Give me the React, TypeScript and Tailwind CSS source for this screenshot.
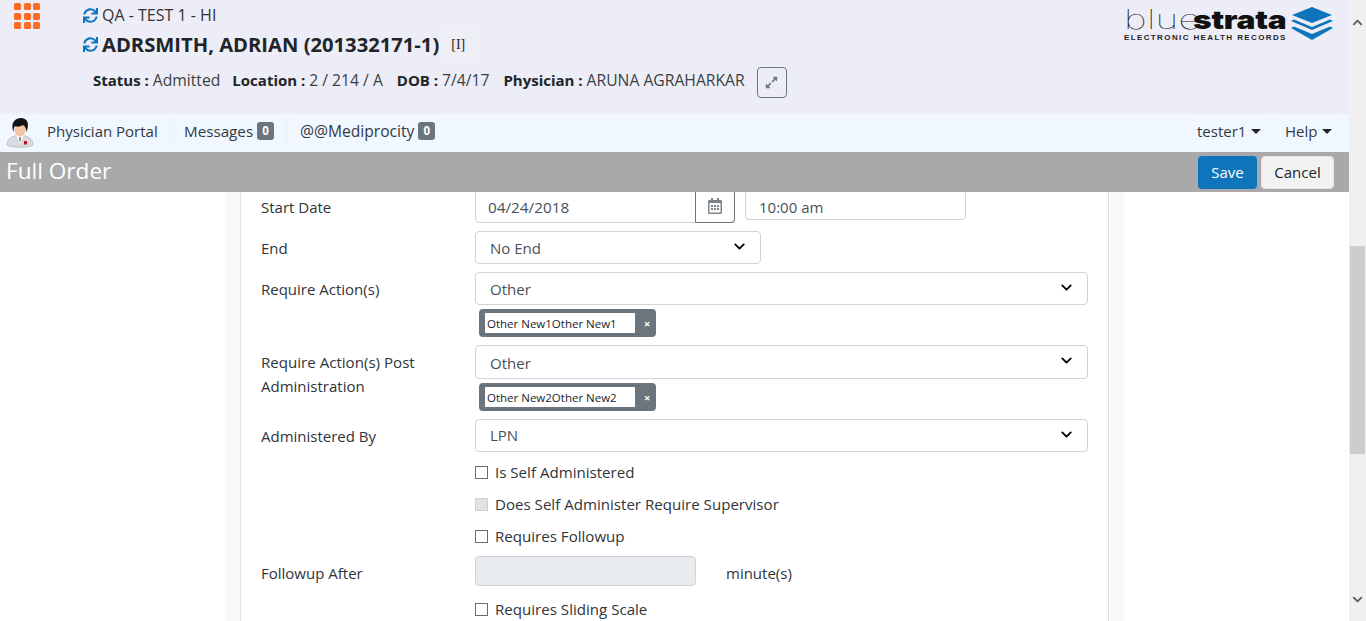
import { FaSync, FaExpandAlt, FaRegCalendarAlt } from "react-icons/fa";
import { ChevronDown, ChevronUp } from "lucide-react";

function Tile() {
  return <span className="size-[7px] rounded-[1.5px] bg-[#ff6a23]" />;
}

function AppGrid() {
  return (
    <div className="grid w-[26px] grid-cols-3 gap-[2.5px]">
      {[0, 1, 2, 3, 4, 5, 6, 7, 8].map((n) => (
        <Tile key={n} />
      ))}
    </div>
  );
}

function DoctorAvatar() {
  return (
    <svg width="28" height="30" viewBox="0 0 28 30" className="shrink-0">
      <path d="M1 27c0-6 4-9 13-10 9 1 13 4 13 10-3 3-23 3-26 0z" fill="#d9dcdf" stroke="#aeb2b6" strokeWidth="0.7" />
      <path d="M10 17l4 8 4-8-4-1z" fill="#fff" />
      <ellipse cx="14" cy="11.5" rx="5.6" ry="7" fill="#f4c5a5" />
      <path d="M7.5 14C4 5 9 0 15 0c6 0 9 5 5.5 14-.5-4-1.500-6-3.500-7-3 2-7 2-8 1-1 1-1.500 3-1.500 6z" fill="#141414" />
      <rect x="13.500" y="19" width="1" height="4" fill="#333" />
      <rect x="18" y="23" width="3" height="3.500" fill="#c8102e" />
    </svg>
  );
}

function Logo() {
  return (
    <div className="flex items-start">
      <div className="flex w-[164px] flex-col pt-[2px]">
        <div className="flex h-[23px] items-center text-[#111] [font-family:Inter,sans-serif]">
          <span className="w-[46px] origin-left scale-x-[1.44] text-[27px] leading-[23px] font-[100] tracking-[0.2px]">blue</span>
          <span className="ml-[23px] origin-left scale-x-[1.22] text-[26px] leading-[23px] font-[900] tracking-[-0.2px]">strata</span>
        </div>
        <div className="mt-[2px] text-[8px] leading-[10px] font-bold tracking-[1.38px] whitespace-nowrap text-[#222] [font-family:'Liberation_Sans',sans-serif]">
          ELECTRONIC HEALTH RECORDS
        </div>
      </div>
      <svg width="44" height="34" viewBox="0 0 44 34" className="mt-[1px] ml-[2px]">
        <path d="M22 0l20 8-20 8L2 8z" fill="#0e75bc" />
        <path d="M1 14l3-1.500 18 7.500 18-7.500 3 1.500-21 9z" fill="#0e75bc" />
        <path d="M1 21l3-1.500 18 7.500 18-7.500 3 1.500-21 12z" fill="#0e75bc" />
      </svg>
    </div>
  );
}

function Stat({ label, value, className = "" }: { label: string; value: string; className?: string }) {
  return (
    <span className={className}>
      <b className="text-[15px] font-bold text-[#212529]">{label} : </b>
      {value}
    </span>
  );
}

function PatientHeader() {
  return (
    <header className="flex h-[114px] shrink-0 bg-[#ecedf6] text-[#212529]">
      <div className="w-[83px] shrink-0 pt-[3px] pl-[14px]">
        <AppGrid />
      </div>
      <div className="flex-1 pt-[5px]">
        <div className="flex h-[20px] items-center text-[16px] text-[#333]">
          <FaSync className="mr-[4px] text-[15px] text-[#0e75bc]" />
          QA - TEST 1 - HI
        </div>
        <div className="mt-[1px] flex h-[36px] items-center">
          <FaSync className="mr-[4px] text-[15px] text-[#0e75bc]" />
          <span className="text-[20.2px] font-bold whitespace-nowrap">ADRSMITH, ADRIAN (201332171-1)</span>
          <span className="flex h-[33px] w-[38px] items-center justify-center rounded-[4px] bg-[#eeeff5] text-[14px] text-[#222] [font-family:'Liberation_Serif',serif]">
            [I]
          </span>
        </div>
        <div className="mt-[4px] flex items-start pl-[10px] text-[15.7px] whitespace-nowrap text-[#3a3f44]">
          <div className="pt-[3px]">
            <Stat label="Status" value="Admitted" />
            <Stat label="Location" value="2 / 214 / A" className="ml-[12px]" />
            <Stat label="DOB" value="7/4/17" className="ml-[14px]" />
            <Stat label="Physician" value="ARUNA AGRAHARKAR" className="ml-[14px]" />
          </div>
          <button className="mt-[1px] ml-[12px] flex h-[31px] w-[30px] items-center justify-center rounded-[4px] border border-[#6c757d] text-[13px] text-[#6c757d]">
            <FaExpandAlt />
          </button>
        </div>
      </div>
      <div className="w-[226px] shrink-0 pt-[6px] pl-[1px]">
        <Logo />
      </div>
    </header>
  );
}

function Badge({ n }: { n: number }) {
  return (
    <span className="ml-[4px] flex h-[18px] w-[17px] items-center justify-center rounded-[3px] bg-[#6c757d] text-[11.5px] font-bold text-white">
      {n}
    </span>
  );
}

function NavTab({ children, className }: { children: React.ReactNode; className: string }) {
  return (
    <div className={`flex h-[32px] items-center rounded-[4px] border border-[#ecf4fd] bg-[#f0f7ff] ${className}`}>
      {children}
    </div>
  );
}

function Caret() {
  return <span className="ml-[5px] border-x-[5px] border-t-[5px] border-x-transparent border-t-[#212529]" />;
}

function NavBar() {
  return (
    <nav className="flex h-[38px] shrink-0 items-start bg-[#f0f7ff] pt-[1px] text-[15px] text-[#33393f]">
      <div className="mt-[3px] ml-[6px] w-[29px]">
        <DoctorAvatar />
      </div>
      <NavTab className="w-[136px] pl-[11px]">Physician Portal</NavTab>
      <NavTab className="ml-[1px] w-[114px] pl-[11px]">
        <span className="text-[15.2px]">Messages</span>
        <Badge n={0} />
      </NavTab>
      <NavTab className="ml-[1px] w-[160px] pl-[12px]">
        <span className="pt-[1px] text-[15.6px]">@@Mediprocity</span>
        <Badge n={0} />
      </NavTab>
      <div className="flex-1" />
      <NavTab className="w-[87px] pl-[11px]">
        tester1
        <Caret />
      </NavTab>
      <NavTab className="mr-[5px] ml-[1px] w-[71px] pl-[11px]">
        Help
        <Caret />
      </NavTab>
    </nav>
  );
}

function TitleBar() {
  return (
    <div className="relative z-10 flex h-[40px] shrink-0 items-center justify-between bg-[#a9a9a9] pr-[15px] pl-[6px]">
      <h1 className="-mt-[2px] text-[22.6px] text-white">Full Order</h1>
      <div className="flex gap-[4px] text-[15px]">
        <button className="h-[33px] w-[59px] rounded-[4px] bg-[#0e75bc] text-white">Save</button>
        <button className="h-[33px] w-[73px] rounded-[4px] border border-[#e4e4e4] bg-[#f2f2f2] text-[#212529]">Cancel</button>
      </div>
    </div>
  );
}

function FakeSelect({ value, className }: { value: string; className: string }) {
  return (
    <div className={`flex items-center justify-between rounded-[4px] border border-[#ced4da] bg-white pr-[12px] pl-[14px] text-[15px] text-[#495057] ${className}`}>
      <span className="pt-[1px]">{value}</span>
      <ChevronDown size={17} strokeWidth={2.6} className="-mt-[3px] text-black" />
    </div>
  );
}

function Tag({ text }: { text: string }) {
  return (
    <div className="mt-[4px] ml-[4px] flex h-[28px] w-[177px] items-center rounded-[4px] bg-[#6c757d] pl-[6px]">
      <span className="flex h-[20px] w-[150px] items-center bg-white pt-[1px] pl-[2px] text-[11.5px] whitespace-nowrap text-[#212529]">{text}</span>
      <span className="ml-[9px] pt-[1px] text-[11px] leading-none font-bold text-white">×</span>
    </div>
  );
}

function Label({ children, className = "" }: { children: React.ReactNode; className?: string }) {
  return <div className={`w-[214px] shrink-0 text-[15px] leading-[24px] text-[#2f353a] ${className}`}>{children}</div>;
}

function CheckRow({ label, disabled, className }: { label: string; disabled?: boolean; className: string }) {
  return (
    <div className={`ml-[214px] flex h-[20px] items-center text-[15.1px] text-[#2f353a] ${className}`}>
      <span className={`mr-[7px] size-[13px] border ${disabled ? "border-[#cfcfcf] bg-[#e3e3e3]" : "border-[#6b6b6b] bg-white"}`} />
      {label}
    </div>
  );
}

function OrderForm() {
  return (
    <div className="h-full flex-1 overflow-hidden bg-white">
      <div className="mx-[225px] h-full bg-[#f8f9fa] px-[15px]">
        <div className="flex h-full flex-col border-x border-[#dee2e6] bg-white px-[20px]">
          <div className="-mt-[3px] flex">
            <Label className="pt-[6px]">Start Date</Label>
            <div className="flex h-[34px] w-[260px] items-center justify-between rounded-l-[4px] border border-[#ced4da] pl-[12px] text-[15.3px] text-[#495057]">
              <span className="pt-[2px]">04/24/2018</span>
              <span className="-mr-[1px] flex h-[34px] w-[40px] items-center justify-center rounded-r-[4px] border border-[#6c757d] text-[#7b8288]">
                <FaRegCalendarAlt size={16} />
              </span>
            </div>
            <div className="ml-[10px] flex h-[31px] w-[221px] items-center rounded-[4px] border border-[#ced4da] pt-[5px] pl-[13px] text-[15px] text-[#495057]">
              10:00 am
            </div>
          </div>

          <div className="mt-[8px] flex">
            <Label className="pt-[5px]">End</Label>
            <FakeSelect value="No End" className="h-[33px] w-[286px]" />
          </div>

          <div className="mt-[8px] flex">
            <Label className="pt-[5px]">Require Action(s)</Label>
            <div className="flex-1">
              <FakeSelect value="Other" className="h-[33px]" />
              <Tag text="Other New1Other New1" />
            </div>
          </div>

          <div className="mt-[8px] flex">
            <Label className="pt-[5px]">
              <span className="text-[15.1px]">Require Action(s) Post</span>
              <br />
              Administration
            </Label>
            <div className="flex-1">
              <FakeSelect value="Other" className="h-[34px] [&>span]:pt-[2px]" />
              <Tag text="Other New2Other New2" />
            </div>
          </div>

          <div className="mt-[8px] flex">
            <Label className="pt-[5px]">Administered By</Label>
            <FakeSelect value="LPN" className="h-[33px] flex-1 [&>span]:pt-0" />
          </div>

          <CheckRow label="Is Self Administered" className="mt-[10px]" />
          <CheckRow label="Does Self Administer Require Supervisor" disabled className="mt-[12px]" />
          <CheckRow label="Requires Followup" className="mt-[12px]" />

          <div className="mt-[10px] flex items-center">
            <Label className="pt-[3px]">Followup After</Label>
            <div className="h-[30px] w-[221px] rounded-[4px] border border-[#ced4da] bg-[#e9ecef]" />
            <span className="ml-[30px] pt-[4px] text-[15px] text-[#2f353a]">minute(s)</span>
          </div>

          <CheckRow label="Requires Sliding Scale" className="mt-[13px]" />
        </div>
      </div>
    </div>
  );
}

function Scrollbar() {
  return (
    <aside className="flex h-full w-[17px] shrink-0 flex-col items-center bg-[#f0f0f0]">
      <ChevronUp size={15} strokeWidth={3} className="mt-[15px] text-[#606060]" />
      <div className="mt-[216px] h-[208px] w-[15px] bg-[#cdcdcd]" />
      <div className="flex-1" />
      <ChevronDown size={15} strokeWidth={3} className="mb-[14px] text-[#606060]" />
    </aside>
  );
}

export default function App() {
  return (
    <div className="flex h-[621px] overflow-hidden bg-white [font-family:'Open_Sans',sans-serif]">
      <main className="flex min-w-0 flex-1 flex-col">
        <PatientHeader />
        <NavBar />
        <TitleBar />
        <OrderForm />
      </main>
      <Scrollbar />
    </div>
  );
}
